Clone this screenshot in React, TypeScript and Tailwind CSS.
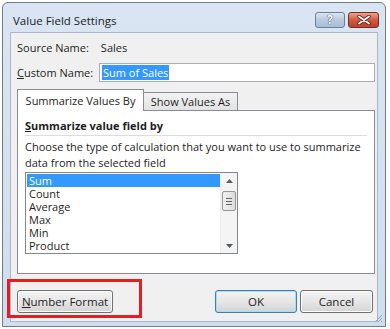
const font = { fontFamily: '"Open Sans", "Noto Sans", sans-serif' };

function WinButton({ children, primary, className }: { children: React.ReactNode; primary?: boolean; className?: string }) {
  return (
    <div
      className={`h-[23px] rounded-[3px] border flex items-center justify-center text-[11.5px] text-[#1e1e1e] bg-gradient-to-b from-[#f3f3f3] via-[#e6e6e6] to-[#d4d4d4] ${
        primary ? "border-[#3c7fb1] shadow-[inset_0_0_0_1px_#a8dcf5]" : "border-[#707070] shadow-[inset_0_0_0_1px_#fcfcfc]"
      } ${className ?? ""}`}
    >
      {children}
    </div>
  );
}

function ScrollBar() {
  return (
    <div className="w-[17px] flex flex-col items-center bg-[#f4f4f4] border-l border-[#ececec]">
      <div className="h-[15px] flex items-center justify-center">
        <svg width="7" height="4" viewBox="0 0 7 4"><path d="M3.5 0L7 4H0z" fill="#5a5a5a" /></svg>
      </div>
      <div className="mt-[3px] w-[14px] h-[20px] rounded-[2px] border border-[#979797] bg-gradient-to-r from-[#f0f0f0] to-[#dcdcdc] flex flex-col items-center justify-center gap-[2px]">
        <div className="w-[6px] h-[1px] bg-[#666]" />
        <div className="w-[6px] h-[1px] bg-[#666]" />
        <div className="w-[6px] h-[1px] bg-[#666]" />
      </div>
      <div className="flex-1" />
      <div className="h-[15px] flex items-center justify-center">
        <svg width="7" height="4" viewBox="0 0 7 4"><path d="M0 0H7L3.5 4z" fill="#5a5a5a" /></svg>
      </div>
    </div>
  );
}

export default function App() {
  const items = ["Sum", "Count", "Average", "Max", "Min", "Product"];
  return (
    <div className="w-[390px] h-[329px] bg-white relative overflow-hidden" style={font}>
      {/* window frame */}
      <div className="absolute left-[2px] top-[2px] w-[384px] h-[325px] rounded-t-[6px] border border-[#707c8a] bg-gradient-to-b from-[#d9e5f2] to-[#cfdeee] flex flex-col">
        {/* title bar */}
        <div className="h-[29px] flex items-start">
          <div className="ml-[10px] mt-[10px] text-[11.5px] text-[#1e1e1e] leading-[16px] whitespace-nowrap">Value Field Settings</div>
          <div className="flex-1" />
          <div className="mt-[9px] mr-[6px] flex gap-[3px]">
            <div className="w-[30px] h-[16px] rounded-[3px] border border-[#6d7f95] bg-gradient-to-b from-[#dbe5f0] via-[#b9cadd] to-[#a9bdd4] flex items-center justify-center">
              <span className="text-[12px] font-bold text-white leading-none" style={{ textShadow: "0 0 1px #2e3e52, 0 0 1px #2e3e52" }}>?</span>
            </div>
            <div className="w-[31px] h-[16px] rounded-[3px] border border-[#7b2a1e] bg-gradient-to-b from-[#e8a493] via-[#d2593f] to-[#c0402a] flex items-center justify-center">
              <svg width="14" height="10" viewBox="0 0 14 10">
                <path d="M2 1.5L12 8.5M12 1.5L2 8.5" stroke="#5a1c12" strokeWidth="3.4" strokeLinecap="round" />
                <path d="M2 1.5L12 8.5M12 1.5L2 8.5" stroke="#ffffff" strokeWidth="1.8" strokeLinecap="round" />
              </svg>
            </div>
          </div>
        </div>

        {/* client area */}
        <div className="mx-[7px] h-[290px] bg-[#f0f0f0] border border-[#a8b8ca] flex flex-col text-[11px] text-[#1e1e1e] leading-[15px] whitespace-nowrap">
          <div className="mt-[7px] ml-[6px] flex">
            <span>Source Name:</span>
            <span className="ml-[12px]">Sales</span>
          </div>
          <div className="mt-[8px] ml-[6px] flex items-center">
            <span className="w-[82px]"><span className="underline">C</span>ustom Name:</span>
            <div className="w-[276px] h-[19px] bg-white border border-[#abadb3] flex items-center pl-[2px]">
              <span className="bg-[#3399ff] text-white px-[1px]">Sum of Sales</span>
            </div>
          </div>

          {/* tabs */}
          <div className="mt-[7px] ml-[6px] flex items-end">
            <div className="w-[127px] h-[22px] bg-white border border-[#898c95] border-b-0 flex items-center justify-center relative z-10 -mb-[1px]">
              Summarize Values By
            </div>
            <div className="w-[94px] h-[18px] bg-gradient-to-b from-[#f2f2f2] to-[#e3e3e3] border border-[#898c95] border-l-0 border-b-0 flex items-center justify-center">
              Show Values As
            </div>
          </div>
          <div className="ml-[6px] w-[358px] h-[164px] bg-white border border-[#898c95] px-[7px] flex flex-col">
            <div className="mt-[7px] font-bold">
              <span className="underline">S</span>ummarize value field by
            </div>
            <div className="mt-[2px] h-[1px] bg-[#dcdcdc]" />
            <div className="mt-[3px] leading-[16px]">
              <div>Choose the type of calculation that you want to use to summarize</div>
              <div>data from the selected field</div>
            </div>
            <div className="mt-[1px] w-[213px] h-[82px] border border-[#828790] flex">
              <div className="flex-1 flex flex-col pt-[1px] pl-[1px] leading-[13px]">
                {items.map((it, i) => (
                  <div
                    key={it}
                    className={`h-[13px] pl-[2px] ${i === 0 ? "bg-[#3399ff] text-white" : ""}`}
                  >
                    {it}
                  </div>
                ))}
              </div>
              <ScrollBar />
            </div>
          </div>

          {/* buttons */}
          <div className="mt-[16px] ml-[6px] mr-[4px] flex">
            <WinButton className="w-[96px]">
              <span><span className="underline">N</span>umber Format</span>
            </WinButton>
            <div className="flex-1" />
            <WinButton primary className="w-[82px]">OK</WinButton>
            <WinButton className="w-[73px] ml-[3px]">Cancel</WinButton>
          </div>
        </div>
      </div>

      {/* resize grip */}
      <svg className="absolute left-[372px] top-[312px]" width="11" height="11" viewBox="0 0 11 11">
        <path d="M10 3L3 10M10 6L6 10M10 9L9 10" stroke="#9aa7b6" strokeWidth="1" />
      </svg>

      {/* red highlight annotation */}
      <div className="absolute left-[7px] top-[279px] w-[135px] h-[39px] border-[3px] border-[#e31e24]" />
    </div>
  );
}
